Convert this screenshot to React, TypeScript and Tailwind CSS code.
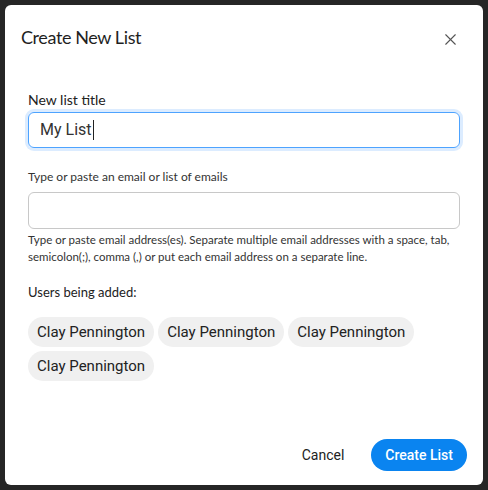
import { X } from 'lucide-react'

const users = ['Clay Pennington', 'Clay Pennington', 'Clay Pennington', 'Clay Pennington']

function Chip({ name }: { name: string }) {
  return (
    <span className="flex h-[30px] items-center rounded-full bg-[#f0f0f0] px-[9px] font-['Roboto'] text-[15px] text-[#222]">
      {name}
    </span>
  )
}

export default function App() {
  const ui = "font-['Lato',sans-serif]"
  return (
    <div className="flex h-[490px] w-[488px] bg-[#262626] p-[5px]">
      <div className={`flex flex-1 flex-col rounded-md bg-white ${ui}`}>
        <div className="flex items-center justify-between pl-[16px] pr-[23px] pt-[20px]">
          <h2 className="text-[18px] leading-[24px] tracking-[-0.4px] text-[#1f1f1f]">Create New List</h2>
          <X className="mt-[4px] h-[19px] w-[19px] text-[#555]" strokeWidth={1.4} />
        </div>

        <div className="flex flex-col px-[23px] pt-[42px]">
          <label className="text-[14px] leading-[18px] text-[#222]">New list title</label>
          <div className="mt-[3px] flex h-[36px] items-center rounded-md border border-[#4da3ff] px-[11px] shadow-[0_0_0_3px_#dcecff]">
            <span className="font-['Roboto'] text-[16px] text-[#333]">My List</span>
            <span className="ml-px h-[20px] w-px bg-[#222]" />
          </div>

          <label className="mt-[21px] text-[12px] leading-[16px] text-[#333]">
            Type or paste an email or list of emails
          </label>
          <div className="mt-[7px] h-[37px] rounded-md border border-[#c8c8c8]" />
          <p className="mt-[2px] text-[11.5px] leading-[17px] text-[#333]">
            Type or paste email address(es). Separate multiple email addresses with a space, tab,
            semicolon(;), comma (,) or put each email address on a separate line.
          </p>

          <div className="mt-[18px] text-[13px] leading-[18px] text-[#222]">Users being added:</div>
          <div className="mt-[16px] flex flex-wrap gap-[4px]">
            {users.map((u, i) => (
              <Chip key={`${u}-${i}`} name={u} />
            ))}
          </div>
        </div>

        <div className="mt-auto flex items-center justify-end gap-[27px] pb-[14px] pr-[16px]">
          <button className="font-['Roboto'] text-[14px] text-[#222]">Cancel</button>
          <button className="h-[32px] rounded-full bg-[#0a84f0] px-[14px] font-['Roboto'] text-[14px] font-medium text-white">
            Create List
          </button>
        </div>
      </div>
    </div>
  )
}
